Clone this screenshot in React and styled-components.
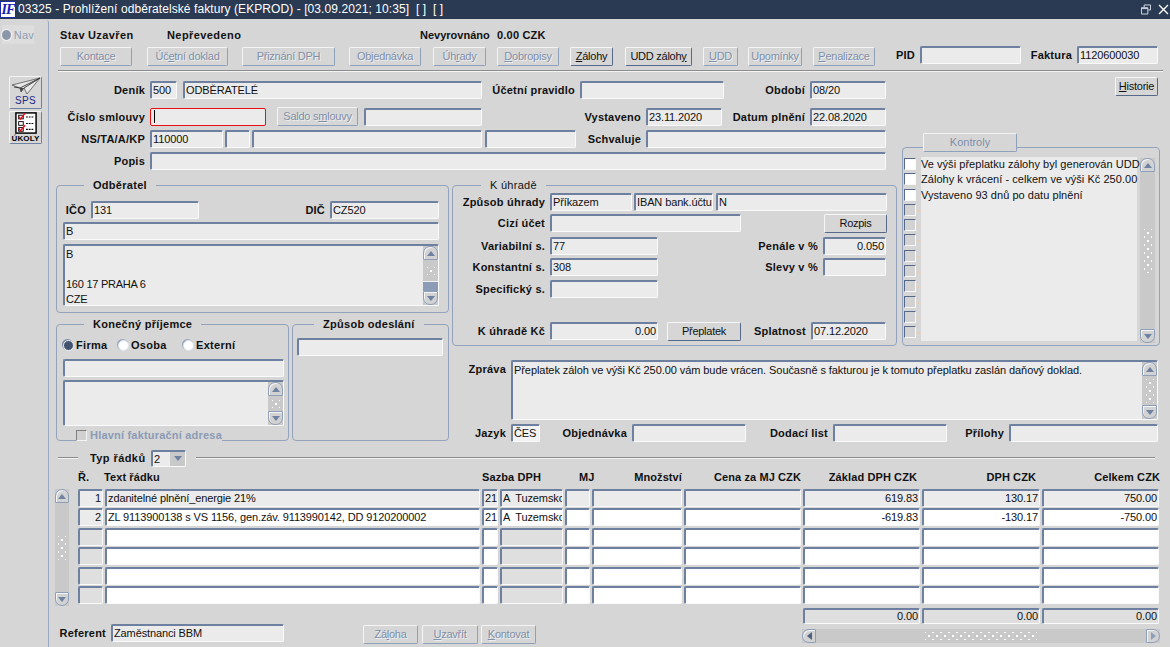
import React from "react";
import styled, { createGlobalStyle } from "styled-components";

const Global = createGlobalStyle`
  html, body { margin: 0; padding: 0; background: #d6d6d6; }
  * { box-sizing: border-box; }
`;

const font = `"Liberation Sans", Arial, sans-serif`;

const Screen = styled.div`
  width: 1170px; height: 647px; overflow: hidden;
  display: flex; flex-direction: column;
  background: #d6d6d6; color: #111;
  font: 11px/14px ${font}; letter-spacing: -0.1px;
`;
const TitleBar = styled.header`
  flex: none; height: 19px; background: #2a3a52; color: #fff;
  display: flex; align-items: center;
`;
const Logo = styled.div`
  flex: none; width: 16px; height: 17px; margin-right: 2px; background: #fff;
  border: 1px solid #1c2ca8; color: #1420b8; text-align: center;
  font: italic bold 14px/15px "Liberation Serif", serif; letter-spacing: -1px;
`;
const TitleText = styled.div`
  flex: 1; font: 12px/19px ${font}; letter-spacing: 0.08px; white-space: pre;
`;
const WinBtn = styled.svg`
  flex: none; width: ${p => p.$w}px; height: 11px; margin-right: ${p => p.$mr}px;
`;
const Body = styled.div`flex: 1; display: flex; min-height: 0;`;
const Rail = styled.aside`
  flex: none; width: 49px; margin-top: 1px;
  border-right: 1px solid #9aa9c2; border-top-right-radius: 3px;
  display: flex; flex-direction: column; align-items: flex-start;
`;
const NavBox = styled.div`
  margin: 5px 0 0 2px; width: 32px; height: 19px; background: #dddddd;
  display: flex; align-items: center; gap: 3px; color: #8d9db7; letter-spacing: 0.2px;
`;
const NavDot = styled.span`
  width: 10px; height: 10px; border-radius: 50%; background: #8b96a8;
  box-shadow: 0 0 0 1px #f2f2f2;
`;
const RailBtn = styled.button`
  display: flex; flex-direction: column; align-items: center; padding: 0;
  width: 33px; height: 33px; margin: ${p => p.$mt}px 0 0 9px;
  background: #d6d6d6; border: 1px solid; border-color: #f4f4f4 #6f82a1 #6f82a1 #f4f4f4; border-radius: 2px;
`;
const RailCaption = styled.span`
  font: ${p => p.$weight} ${p => p.$size}px/9px ${font}; color: ${p => p.$color}; letter-spacing: ${p => p.$ls}px;
`;
const Main = styled.main`flex: 1; min-width: 0; display: flex; flex-direction: column;`;
const StatusRow = styled.div`display: flex; height: 14px; margin: 9px 0 0 11px;`;
const StatusItem = styled.span`
  flex: none; width: ${p => p.$w}px; font-weight: bold; white-space: nowrap;
  letter-spacing: ${p => (p.$ls === undefined ? 0.42 : p.$ls)}px;
`;
const Toolbar = styled.div`
  display: flex; align-items: flex-start; height: 20px; margin: 4px 0 0 11px;
`;
const Btn = styled.button`
  flex: none; padding: 0; width: ${p => p.$w}px; height: 19px;
  margin: ${p => p.$mt || 0}px 0 0 ${p => p.$ml || 0}px;
  font: 11px/15px ${font}; letter-spacing: -0.25px; text-align: center; background: #d6d6d6;
  border: 1px solid; border-radius: 2px;
  border-color: ${p => p.$on ? "#f6f6f6 #56698a #56698a #f6f6f6" : "#f4f4f4 #8fa0ba #8fa0ba #f4f4f4"};
  color: ${p => p.$on ? "#111" : "#7f8fa9"};
  text-shadow: ${p => p.$on ? "none" : "1px 1px 0 #eeeeee"};
  white-space: nowrap;
`;
const Rule = styled.div`
  width: 1105px; height: 2px; margin: 4px 0 0 9px;
  border-top: 1px solid #8c8c8c; border-bottom: 1px solid #f4f4f4;
`;
const FormGrid = styled.div`
  display: grid; margin: 5px 0 0 7px;
  grid-template-columns: 392px 448px 264px;
  grid-template-rows: 108px 161px 97px;
  grid-template-areas: "top top right" "left pay right" "left note note";
`;
const TopArea = styled.section`grid-area: top; padding-top: 4px;`;
const LeftArea = styled.section`grid-area: left;`;
const PayArea = styled.section`grid-area: pay; padding-left: 4px; height: 161px;`;
const RightArea = styled.section`
  grid-area: right; padding-left: 6px; display: flex; flex-direction: column;
`;
const NoteArea = styled.section`grid-area: note; padding: 14px 0 0 0;`;
const FormRow = styled.div`
  display: flex; align-items: flex-start; min-height: 18px; margin-top: ${p => p.$mt || 0}px;
`;
const Label = styled.label`
  flex: none; width: ${p => p.$w}px; margin-right: 5px; text-align: right;
  font-weight: bold; line-height: 18px; letter-spacing: 0.22px; white-space: nowrap;
`;
const tones = { ro: "#ebebeb", white: "#ffffff", grey: "#dfdfdf", soft: "#f3f3f3" };
const Field = styled.div`
  flex: none; width: ${p => (p.$w ? `${p.$w}px` : "auto")}; height: ${p => p.$h || 18}px;
  margin-left: ${p => p.$ml || 0}px; padding: ${p => (p.$right ? "0 1px" : "0 0 0 1px")}; min-width: 0;
  background: ${p => tones[p.$tone || "ro"]};
  border: 1px solid; border-width: 2px 1px 1px 2px; border-radius: 2px;
  border-color: ${p => p.$red ? "#e81010" : "#6d80a0 #fafafa #fafafa #6d80a0"};
  ${p => p.$red ? "border-width: 1px; padding-left: 2px;" : ""}
  line-height: 14px; overflow: hidden; white-space: pre; letter-spacing: -0.12px;
  text-align: ${p => (p.$right ? "right" : "left")};
`;
const Caret = styled.span`
  display: block; width: 1px; height: 13px; margin: 1px 0 0 1px; background: #000;
`;
const Memo = styled(Field)`
  display: flex; padding: 0; white-space: normal;
`;
const MemoText = styled.div`
  flex: 1; min-width: 0; padding: ${p => p.$pt || 1}px 2px 0 ${p => p.$pl || 1}px; line-height: 15px; white-space: pre;
  letter-spacing: ${p => p.$ls || 0}px;
`;
const VBar = styled.div`
  flex: none; display: flex; flex-direction: column; width: ${p => p.$w || 15}px;
  height: ${p => (p.$h ? `${p.$h}px` : "auto")}; background: #c9c9c9; margin: ${p => p.$m || 0};
`;
const VEnd = styled.div`
  flex: none; height: ${p => p.$h || 14}px; display: flex; align-items: center; justify-content: center;
  background: #d2d2d2; border: 1px solid #8e9fba; box-shadow: inset 1px 1px 0 #f4f4f4;
  border-radius: ${p => (p.$up ? "7px 7px 1px 1px" : "1px 1px 7px 7px")};
`;
const Tri = styled.span`
  width: 0; height: 0; border-left: 4px solid transparent; border-right: 4px solid transparent;
  ${p => (p.$up ? "border-bottom: 5px solid #6f82a1;" : "border-top: 5px solid #6f82a1;")}
`;
const TriH = styled.span`
  width: 0; height: 0; border-top: 4px solid transparent; border-bottom: 4px solid transparent;
  ${p => (p.$left ? "border-right: 5px solid #4f6080;" : "border-left: 5px solid #8e9fba;")}
`;
const VThumb = styled.div`
  flex: ${p => (p.$h ? `none` : "1")}; height: ${p => (p.$h ? `${p.$h}px` : "auto")};
  display: flex; align-items: center; justify-content: center; background: #c9c9c9;
  border-bottom: ${p => (p.$h ? "1px solid #f0f0f0" : "none")};
`;
const VRest = styled.div`flex: 1; background: #8c9cb7;`;
const Grip = styled.span`
  display: block; width: ${p => p.$w}px; height: ${p => p.$h}px;
  background-image: radial-gradient(circle, #fff 0 0.7px, transparent 1.1px), radial-gradient(circle, #fff 0 0.7px, transparent 1.1px);
  background-size: 8px 8px; background-position: 0 0, 4px 4px;
`;
const Panel = styled.div`
  position: relative; flex: none; width: ${p => p.$w}px; height: ${p => p.$h}px;
  margin: ${p => p.$m || 0}; padding: ${p => p.$pad || 0};
  border: 1px solid #93a3bd; border-radius: 4px;
`;
const Legend = styled.span`
  position: absolute; top: -8px; left: ${p => p.$left}px; padding: 0 9px; background: #d6d6d6;
  font-weight: ${p => (p.$plain ? "normal" : "bold")}; line-height: 14px;
  letter-spacing: 0.28px; white-space: nowrap;
`;
const Split = styled.div`display: flex;`;
const RadioRow = styled.div`display: flex; align-items: center; height: 14px; margin-top: 13px;`;
const Radio = styled.span`
  flex: none; width: 11px; height: 11px; border-radius: 50%;
  margin: 0 2px 0 ${p => p.$ml || 0}px;
  background: ${p => (p.$on ? "#43536f" : "#ffffff")};
  border: 1.5px solid ${p => (p.$on ? "#f4f4f4" : "#dfe3ea")};
  box-shadow: -1px -1px 0 ${p => (p.$on ? "#7a8aa5" : "#9aa8bf")};
`;
const RadioText = styled.span`
  flex: none; width: ${p => p.$w}px; font-weight: bold; letter-spacing: 0.3px;
`;
const FloatCheck = styled.div`
  display: inline-flex; align-items: center; height: 14px; margin: 2px 0 0 13px;
  background: #d6d6d6; color: #8b9bb5; font-weight: bold; letter-spacing: 0.2px; white-space: nowrap;
`;
const GreyBox = styled.span`
  flex: none; width: 11px; height: 11px; margin-right: 3px; background: #d0d0d0;
  border: 1px solid; border-color: #808080 #f4f4f4 #f4f4f4 #808080;
`;
const HistBtn = styled(Btn)`align-self: flex-end; margin-right: 2px;`;
const Tab = styled.div`
  position: relative; z-index: 1; flex: none; width: 94px; height: 19px; margin: 37px 0 -5px 21px;
  background: #d6d6d6; color: #7f8fa9; text-align: center; line-height: 17px; letter-spacing: 0;
  border: 1px solid; border-color: #f4f4f4 #8fa0ba #8fa0ba #f4f4f4; border-radius: 2px;
`;
const KontrolyBody = styled.div`display: flex; height: 197px; padding: 9px 0 0 1px;`;
const Checks = styled.div`
  flex: none; width: 14px; display: flex; flex-direction: column; row-gap: 3.3px; margin-top: 1px;
`;
const Check = styled.span`
  position: relative; display: block; width: 12px; height: 12px;
  background: ${p => (p.$on ? "#ffffff" : "#d2d2d2")};
  border: 1px solid; border-color: #56698a #f8f8f8 #f8f8f8 #56698a;
  ${p => (p.$on ? "" : `&::after { content: ""; position: absolute; left: 13px; top: 5px; width: 1px; height: 2px; background: #e9c9a6; }`)}
`;
const ListBox = styled.div`
  flex: none; width: 216px; height: 184px; margin-left: 3px; background: #ebebeb;
`;
const ListLine = styled.div`
  height: 15.4px; line-height: 15px; white-space: nowrap; letter-spacing: 0.04px;
`;
const Section = styled.div`
  display: flex; align-items: center; height: 18px; margin: 6px 15px 0 9px;
`;
const SecLine = styled.div`
  flex: ${p => (p.$w ? "none" : "1")}; width: ${p => p.$w || 0}px; height: 2px;
  border-top: 1px solid #8c8c8c; border-bottom: 1px solid #f2f2f2;
`;
const SecLabel = styled.span`
  flex: none; width: 61px; margin-left: 12px; font-weight: bold; letter-spacing: 0.42px; white-space: nowrap;
`;
const SelectBox = styled(Field)`
  display: flex; align-items: center; justify-content: space-between; padding: 0 0 0 1px; margin-right: 10px;
`;
const SelectArrow = styled.span`
  width: 15px; height: 14px; background: #c9c9c9; display: flex; align-items: center; justify-content: center;
`;
const tableCols = "25px 375px 16px 63px 25px 90px 117px 117px 118px 117px";
const TableHead = styled.div`
  display: grid; grid-template-columns: ${tableCols}; column-gap: 2px;
  margin: 3px 0 0 29px; height: 14px;
`;
const HeadCell = styled.div`
  grid-column: span ${p => p.$span || 1}; font-weight: bold; letter-spacing: 0.1px; white-space: nowrap;
  text-align: ${p => p.$align || "left"}; padding-right: ${p => p.$pr || 0}px; margin-left: ${p => p.$ml || 0}px;
  margin-right: ${p => p.$mr || 0}px;
`;
const TableBody = styled.div`display: flex; margin: 5px 0 0 6px;`;
const Rows = styled.div`
  margin-left: 9px; display: grid; grid-template-columns: ${tableCols};
  column-gap: 2px; grid-auto-rows: 18px; row-gap: 1.4px;
`;
const SumRow = styled.div`
  display: grid; grid-template-columns: ${tableCols}; column-gap: 2px; margin: 2px 0 0 29px; height: 16px;
`;
const SumGap = styled.div`grid-column: span 7;`;
const SumCell = styled(Field)`height: 16px; line-height: 13px;`;
const Footer = styled.div`display: flex; align-items: flex-start; height: 21px; margin: 0 0 0 8px;`;
const HBar = styled.div`
  flex: none; display: flex; width: 358px; height: 14px; margin: 5px 0 0 ${p => p.$ml}px; background: #c9c9c9;
`;
const HEnd = styled.div`
  flex: none; width: 14px; display: flex; align-items: center; justify-content: center; background: #d2d2d2;
  border: 1px solid #8e9fba; box-shadow: inset 1px 1px 0 #f4f4f4;
  border-radius: ${p => (p.$left ? "7px 1px 1px 7px" : "1px 7px 7px 1px")};
`;
const HThumb = styled.div`flex: 1; display: flex; align-items: center; justify-content: center;`;
const Ul = styled.u`text-underline-offset: 1px;`;

const TOOLBAR = [
  [72, 0, <>Konta<Ul>c</Ul>e</>],
  [81, 15, <>Úč<Ul>e</Ul>tní doklad</>],
  [93, 14, <>Přiznání DPH</>],
  [72, 14, <>Objednávka</>],
  [53, 12, <>Úh<Ul>r</Ul>ady</>],
  [62, 11, <><Ul>D</Ul>obropisy</>],
  [43, 11, <><Ul>Z</Ul>álohy</>, true],
  [67, 12, <>UDD záloh<Ul>y</Ul></>, true],
  [35, 11, <><Ul>U</Ul>DD</>],
  [54, 10, <>Up<Ul>o</Ul>mínky</>],
  [62, 11, <><Ul>P</Ul>enalizace</>],
];

const ROWS = [
  { n: "1", text: "zdanitelné plnění_energie 21%", s: "21", a: "A  Tuzemsko", z: "619.83", d: "130.17", c: "750.00" },
  { n: "2", text: "ZL 9113900138 s VS 1156, gen.záv. 9113990142, DD 9120200002", s: "21", a: "A  Tuzemsko", z: "-619.83", d: "-130.17", c: "-750.00" },
  {}, {}, {}, {},
];

function VScroll({ thumb, rest, h, m, w, gripH = 16 }) {
  return (
    <VBar $h={h} $m={m} $w={w}>
      <VEnd $up><Tri $up /></VEnd>
      <VThumb $h={rest ? thumb : 0}><Grip $w={8} $h={gripH} /></VThumb>
      {rest && <VRest />}
      <VEnd><Tri /></VEnd>
    </VBar>
  );
}

function PlaneIcon() {
  return (
    <svg width="30" height="19" viewBox="0 0 30 19">
      <path d="M1 8 L29 1 L16 17 L13 11 L10 15 L9 11 Z" fill="#e8e8e8" stroke="#555" strokeWidth="0.8" />
      <path d="M9 11 L29 1 L13 11 M9 11 L3 10" fill="none" stroke="#333" strokeWidth="0.9" />
      <path d="M9 11 L10 15 L13 11 Z" fill="#444" />
    </svg>
  );
}
function TaskIcon() {
  return (
    <svg width="22" height="22" viewBox="0 0 24 23">
      <rect x="1" y="0.5" width="22" height="22" fill="#fff" stroke="#000" strokeWidth="1.6" />
      <rect x="4" y="3" width="5" height="4" fill="#fff" stroke="#000" />
      <rect x="4" y="10" width="5" height="4" fill="#fff" stroke="#000" />
      <rect x="4" y="16.5" width="5" height="4" fill="#fff" stroke="#000" />
      <path d="M4 4.5 L6 7 L11 1 M4 17 L6 20 L11 14" fill="none" stroke="#e01020" strokeWidth="1.6" />
      <path d="M12 5 H21 M12 12 H21 M12 18.5 H21" stroke="#000" strokeWidth="1.2" strokeDasharray="2 1" />
    </svg>
  );
}

export default function App() {
  return (
    <Screen>
      <Global />
      <TitleBar>
        <Logo>IF</Logo>
        <TitleText>03325 - Prohlížení odběratelské faktury (EKPROD) - [03.09.2021; 10:35]  [ ]  [ ]</TitleText>
        <WinBtn $w={10} $mr={7} viewBox="0 0 11 11" fill="none" stroke="#dfe6f0" strokeWidth="1">
          <path d="M3.5 3 V0.5 H10.5 V6 H8 M0.5 3.5 H7.5 V10.5 H0.5 Z M0.5 4.5 H7.5" />
        </WinBtn>
        <WinBtn $w={11} $mr={1} viewBox="0 0 11 11" fill="none" stroke="#ffffff" strokeWidth="1.4">
          <path d="M1 1 L10 10 M10 1 L1 10" />
        </WinBtn>
      </TitleBar>
      <Body>
        <Rail>
          <NavBox><NavDot />Nav</NavBox>
          <RailBtn $mt={32}>
            <PlaneIcon />
            <RailCaption $size={10} $weight="normal" $color="#1a2a8a" $ls={0.3}>SPS</RailCaption>
          </RailBtn>
          <RailBtn $mt={2}>
            <TaskIcon />
            <RailCaption $size={8} $weight="bold" $color="#000" $ls={0.1}>ÚKOLY</RailCaption>
          </RailBtn>
        </Rail>
        <Main>
          <StatusRow>
            <StatusItem $w={28}>Stav</StatusItem>
            <StatusItem $w={79}>Uzavřen</StatusItem>
            <StatusItem $w={253}>Nepřevedeno</StatusItem>
            <StatusItem $w={77} $ls={0}>Nevyrovnáno</StatusItem>
            <StatusItem $w={70} $ls={0.2}>0.00 CZK</StatusItem>
          </StatusRow>
          <Toolbar>
            {TOOLBAR.map(([w, ml, t, on], i) => (
              <Btn key={i} $w={w} $ml={ml} $mt={1} $on={on}>{t}</Btn>
            ))}
            <Label $w={40}>PID</Label>
            <Field $w={101} />
            <Label $w={51}>Faktura</Label>
            <Field $w={81}>1120600030</Field>
          </Toolbar>
          <Rule />
          <FormGrid>
            <TopArea>
              <FormRow>
                <Label $w={89}>Deník</Label>
                <Field $w={27}>500</Field>
                <Field $w={299} $ml={6}>ODBĚRATELÉ</Field>
                <Label $w={93}>Účetní pravidlo</Label>
                <Field $w={144} />
                <Label $w={81}>Období</Label>
                <Field $w={76}>08/20</Field>
              </FormRow>
              <FormRow $mt={9}>
                <Label $w={89}>Číslo smlouvy</Label>
                <Field $w={116} $red><Caret /></Field>
                <Btn $w={81} $ml={11} $mt={-1}>Saldo s<Ul>m</Ul>louvy</Btn>
                <Field $w={118} $ml={6} />
                <Label $w={159}>Vystaveno</Label>
                <Field $w={76}>23.11.2020</Field>
                <Label $w={83}>Datum plnění</Label>
                <Field $w={76}>22.08.2020</Field>
              </FormRow>
              <FormRow $mt={4}>
                <Label $w={89}>NS/TA/A/KP</Label>
                <Field $w={73}>110000</Field>
                <Field $w={25} $ml={2} />
                <Field $w={230} $ml={2} />
                <Field $w={91} $ml={3} />
                <Label $w={65}>Schvaluje</Label>
                <Field $w={240} />
              </FormRow>
              <FormRow $mt={4}>
                <Label $w={89}>Popis</Label>
                <Field $w={736} />
              </FormRow>
            </TopArea>

            <LeftArea>
              <Panel $w={393} $h={128} $pad="15px 0 0 6px">
                <Legend $left={27}>Odběratel</Legend>
                <FormRow>
                  <Label $w={23}>IČO</Label>
                  <Field $w={108}>131</Field>
                  <Label $w={126}>DIČ</Label>
                  <Field $w={109}>CZ520</Field>
                </FormRow>
                <FormRow $mt={3}>
                  <Field $w={376}>B</Field>
                </FormRow>
                <FormRow $mt={4}>
                  <Memo $w={376} $h={62}>
                    <MemoText $ls={-0.25}>{"B\n\n160 17 PRAHA 6\nCZE"}</MemoText>
                    <VScroll thumb={22} rest gripH={8} />
                  </Memo>
                </FormRow>
              </Panel>
              <Split>
                <Panel $w={233} $h={117} $m="11px 0 0 0" $pad="0 0 0 6px">
                  <Legend $left={27}>Konečný příjemce</Legend>
                  <RadioRow>
                    <Radio $on /><RadioText $w={42}>Firma</RadioText>
                    <Radio /><RadioText $w={52}>Osoba</RadioText>
                    <Radio /><RadioText $w={50}>Externí</RadioText>
                  </RadioRow>
                  <FormRow $mt={7}><Field $w={221} /></FormRow>
                  <FormRow $mt={3}>
                    <Memo $w={221} $h={46}>
                      <MemoText />
                      <VScroll gripH={8} />
                    </Memo>
                  </FormRow>
                  <FloatCheck><GreyBox />Hlavní fakturační adresa</FloatCheck>
                </Panel>
                <Panel $w={157} $h={117} $m="11px 0 0 3px" $pad="13px 0 0 4px">
                  <Legend $left={21}>Způsob odeslání</Legend>
                  <Field $w={146} />
                </Panel>
              </Split>
            </LeftArea>

            <PayArea>
              <Panel $w={445} $h={161} $pad="7px 0 0 0">
                <Legend $left={28} $plain>K úhradě</Legend>
                <FormRow>
                  <Label $w={92}>Způsob úhrady</Label>
                  <Field $w={82}>Příkazem</Field>
                  <Field $w={79} $ml={2}>IBAN bank.účtu</Field>
                  <Field $w={171} $ml={3}>N</Field>
                </FormRow>
                <FormRow $mt={3}>
                  <Label $w={92}>Cizí účet</Label>
                  <Field $w={191} />
                  <Btn $w={63} $ml={83} $on>Rozpis</Btn>
                </FormRow>
                <FormRow $mt={4}>
                  <Label $w={92}>Variabilní s.</Label>
                  <Field $w={108}>77</Field>
                  <Label $w={160}>Penále v %</Label>
                  <Field $w={63} $right>0.050</Field>
                </FormRow>
                <FormRow $mt={3}>
                  <Label $w={92}>Konstantní s.</Label>
                  <Field $w={108}>308</Field>
                  <Label $w={160}>Slevy v %</Label>
                  <Field $w={63} />
                </FormRow>
                <FormRow $mt={4}>
                  <Label $w={92}>Specifický s.</Label>
                  <Field $w={108} />
                </FormRow>
                <FormRow $mt={24}>
                  <Label $w={92}>K úhradě Kč</Label>
                  <Field $w={108} $right>0.00</Field>
                  <Btn $w={74} $ml={9} $on>Přeplatek</Btn>
                  <Label $w={65}>Splatnost</Label>
                  <Field $w={75}>07.12.2020</Field>
                </FormRow>
              </Panel>
            </PayArea>

            <NoteArea>
              <FormRow>
                <Label $w={58}>Zpráva</Label>
                <Memo $w={647} $h={60}>
                  <MemoText $ls={-0.07}>Přeplatek záloh ve výši Kč 250.00 vám bude vrácen. Současně s fakturou je k tomuto přeplatku zaslán daňový doklad.</MemoText>
                  <VScroll gripH={24} />
                </Memo>
              </FormRow>
              <FormRow $mt={4}>
                <Label $w={58}>Jazyk</Label>
                <Field $w={29} $tone="soft">ČES</Field>
                <Label $w={87}>Objednávka</Label>
                <Field $w={114} />
                <Label $w={82}>Dodací list</Label>
                <Field $w={114} />
                <Label $w={57}>Přílohy</Label>
                <Field $w={149} />
              </FormRow>
            </NoteArea>

            <RightArea>
              <HistBtn $w={43} $on><Ul>H</Ul>istorie</HistBtn>
              <Tab>Kontroly</Tab>
              <Panel $w={258} $h={199}>
                <KontrolyBody>
                  <Checks>
                    {Array.from({ length: 12 }, (_, i) => <Check key={i} $on={i < 3} />)}
                  </Checks>
                  <ListBox>
                    <ListLine>Ve výši přeplatku zálohy byl generován UDD</ListLine>
                    <ListLine>Zálohy k vrácení - celkem ve výši Kč 250.00</ListLine>
                    <ListLine>Vystaveno 93 dnů po datu plnění</ListLine>
                  </ListBox>
                  <VScroll h={185} m="1px 0 0 3px" gripH={44} />
                </KontrolyBody>
              </Panel>
            </RightArea>
          </FormGrid>

          <Section>
            <SecLine $w={20} />
            <SecLabel>Typ řádků</SecLabel>
            <SelectBox $w={35} $h={17}>2<SelectArrow><Tri /></SelectArrow></SelectBox>
            <SecLine />
          </Section>
          <TableHead>
            <HeadCell>Ř.</HeadCell>
            <HeadCell $ml={-1}>Text řádku</HeadCell>
            <HeadCell $span={2}>Sazba DPH</HeadCell>
            <HeadCell $align="center" $ml={14}>MJ</HeadCell>
            <HeadCell $align="right">Množství</HeadCell>
            <HeadCell $align="right">Cena za MJ CZK</HeadCell>
            <HeadCell $align="right" $pr={3}>Základ DPH CZK</HeadCell>
            <HeadCell $align="right" $pr={4}>DPH CZK</HeadCell>
            <HeadCell $align="right" $mr={-1}>Celkem CZK</HeadCell>
          </TableHead>
          <TableBody>
            <VScroll h={117} w={14} gripH={24} />
            <Rows>
              {ROWS.map((r, i) => {
                const base = i === 0 ? "ro" : "white";
                return (
                  <React.Fragment key={i}>
                    <Field $tone={i < 2 ? "ro" : "grey"} $right>{r.n}</Field>
                    <Field $tone={base}>{r.text}</Field>
                    <Field $tone={base}>{r.s}</Field>
                    <Field $tone={i < 1 ? "ro" : i === 1 ? "white" : "grey"}>{r.a}</Field>
                    <Field $tone={base} />
                    <Field $tone={base} />
                    <Field $tone={base} />
                    <Field $tone={base} $right>{r.z}</Field>
                    <Field $tone={base} $right>{r.d}</Field>
                    <Field $tone={base} $right>{r.c}</Field>
                  </React.Fragment>
                );
              })}
            </Rows>
          </TableBody>
          <SumRow>
            <SumGap />
            <SumCell $tone="grey" $right>0.00</SumCell>
            <SumCell $tone="grey" $right>0.00</SumCell>
            <SumCell $tone="grey" $right>0.00</SumCell>
          </SumRow>
          <Footer>
            <Label $w={49}>Referent</Label>
            <Field $w={173}>Zaměstnanci BBM</Field>
            <Btn $w={55} $ml={79} $mt={1}>Zá<Ul>l</Ul>oha</Btn>
            <Btn $w={56} $ml={4} $mt={1}><Ul>U</Ul>zavřít</Btn>
            <Btn $w={55} $ml={3} $mt={1}><Ul>K</Ul>ontovat</Btn>
            <HBar $ml={266}>
              <HEnd $left><TriH $left /></HEnd>
              <HThumb><Grip $w={112} $h={8} /></HThumb>
              <HEnd><TriH /></HEnd>
            </HBar>
          </Footer>
        </Main>
      </Body>
    </Screen>
  );
}
